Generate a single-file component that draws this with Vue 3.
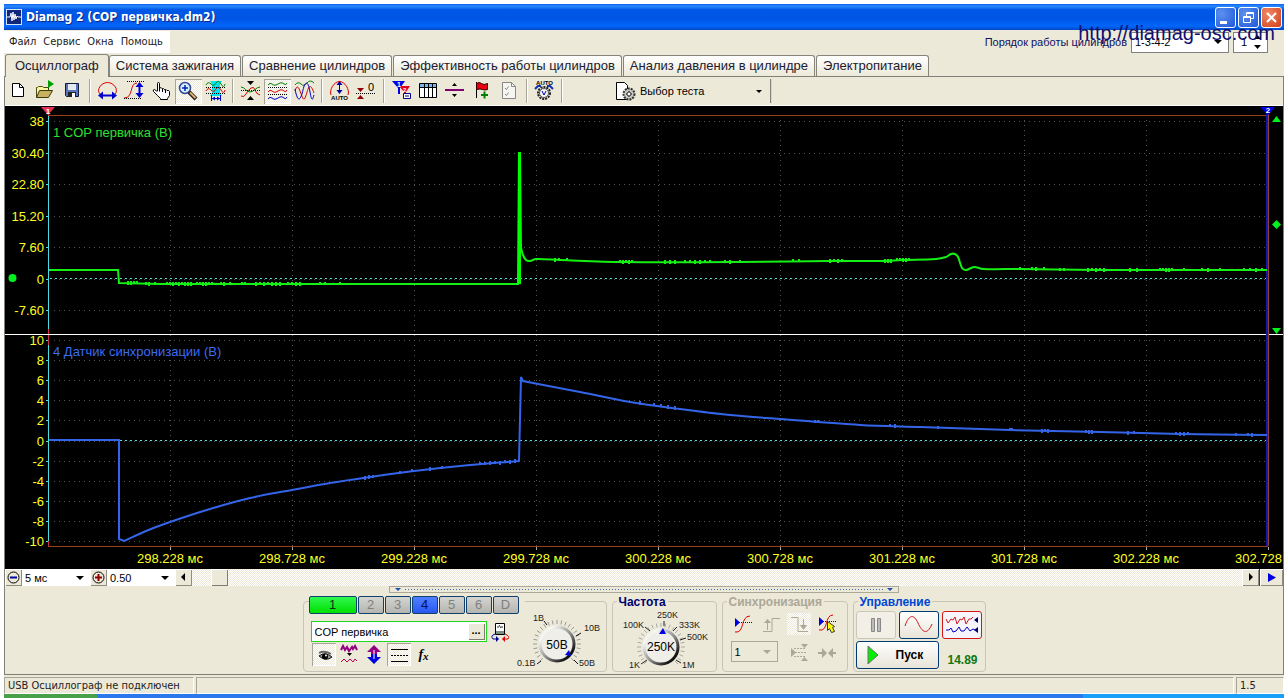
<script setup>
import { ref } from 'vue'

const tabs = [
  'Осциллограф',
  'Система зажигания',
  'Сравнение цилиндров',
  'Эффективность работы цилиндров',
  'Анализ давления в цилиндре',
  'Электропитание',
]
const activeTab = ref(0)

const red = 'fill="none" stroke="#d80000"'
const blue = 'fill="none" stroke="#0000c8"'
const green = 'fill="none" stroke="#008000"'
const dots = 'fill="none" stroke="#000" stroke-dasharray="1 1"'

// Toolbar groups; every glyph is drawn on a 27x25 grid.
const toolGroups = [
  [
    { name: 'Новый', art: '<path d="M7.500 4.500h7l4 4v9h-11z" fill="#fff" stroke="#000"/><path d="M14.500 4.500v4h4" fill="none" stroke="#000"/>' },
    { name: 'Открыть', art: '<path d="M4.500 18.500v-10h1l1-1h4l1 1h5v3" fill="#fbf6a0" stroke="#4a4a10"/><path d="M4.500 18.500l3-7h13l-4 7z" fill="#c8b060" stroke="#3a3a10"/><path d="M16.500 2v8" stroke="#004000"/><path d="M16 1l6 4-6 4z" fill="#00a000"/>' },
    { name: 'Сохранить', art: '<path d="M6.500 4.500h13v13h-12l-1-1z" fill="#5b74b8" stroke="#101838"/><path d="M9 5h8v6H9z" fill="#e4e8f0"/><path d="M9 13h8v5H9z" fill="#222"/><path d="M13 14h3v4h-3z" fill="#fff"/>' },
  ],
  [
    { name: 'Масштаб по времени', art: `<path d="M6 15C2 11 7 3.500 13.500 3.500S25 11 21 15" ${red}/><path d="M8 16.500h11" stroke="#0000d0" stroke-width="2"/><path d="M4 16.500l5-4v8zM23 16.500l-5-4v8z" fill="#0000d0"/>` },
    { name: 'Масштаб по амплитуде', art: `<path d="M3 19c10 0 5-15 13-15" ${red}/><path d="M6 2.500h17M3 19.500h17" ${dots}/><path d="M18.500 6v10" stroke="#0000d0" stroke-width="2"/><path d="M18.500 3l-4 5h8zM18.500 19l-4-5h8z" fill="#0000d0"/>` },
    { name: 'Рука', art: '<path d="M9.500 12V4.500q0-1 1-1t1 1V10V9q2-1 2.500.5V10q2-1 2.500.5v.5q2-1 2.500.5 2-.5 2.500 1v4l-2 3v1h-7v-1l-3-3-4-4q-1-2 1-2l2 1.500z" fill="#fff" stroke="#000"/><path d="M11.500 9.500v3M14.500 10v3M17.500 11v3" stroke="#000"/>' },
    { name: 'Лупа', pressed: true, art: '<circle cx="10" cy="9" r="5.500" fill="#d8f0ff" stroke="#304890" stroke-width="1.500"/><path d="M7 9h6M10 6v6" stroke="#0020b0" stroke-width="1.500"/><path d="M14 13l7 7" stroke="#222" stroke-width="4"/><path d="M15 13.500l5.500 5.500" stroke="#e0b070" stroke-width="2"/>' },
    { name: 'Выделение', art: `<path d="M8 2h12l-2 3v9l2 3H8l2-3V5z" fill="#00e4f0"/><path d="M4 6q2-4 5-1t5-1 5 1 4 0" ${green}/><path d="M4 12q2-4 5-1t5-1 5 1 4 0" ${red}/><path d="M4 8.500h20M4 14.500h20" ${dots}/><path d="M10 19.500h8M9.500 16v6M18.500 16v6" stroke="#0000c0" fill="none"/><path d="M10 19.500l3-2v4zM18 19.500l-3-2v4z" fill="#0000c0"/>` },
  ],
  [
    { name: 'Совместить', art: `<path d="M4 17q3 2 5-2t5-6 4 2 5 5" ${red}/><path d="M4 8c4 0 5 5 9 5s6-5 10-5" ${green}/><path d="M4 11.500h19" ${dots}/><path d="M10 2h7l-3.500 4zM10 21h7l-3.500-4z" fill="#000"/>` },
    { name: 'Разнести', pressed: true, art: `<path d="M4 6q2-3 4-1t4 1 4-2 4 1 3-1" ${green}/><path d="M4 13q2-3 4-1t4 1 4-2 4 1 3-1" ${red}/><path d="M4 20q2-3 4-1t4 1 4-2 4 1 3-1" ${blue}/><path d="M4 8.500h19M4 15.500h19" ${dots}/>` },
    { name: 'Наложить', art: `<path d="M4 6q3-4 6-1t6-1 7 0" ${green}/><path d="M4 12c4-14 7 14 10 7s4-19 9-5" ${red}/><path d="M4 10c3 16 6 10 8 1s5-10 7 2 3 6 4 3" ${blue}/>` },
  ],
  [
    { name: 'Автомасштаб', art: `<path d="M5 16C3 11 8 2.500 13.500 2.500S24 11 22 16" ${red}/><path d="M13.500 4v10" stroke="#0000a0" stroke-width="1"/><path d="M13.500 2l-3 4h6zM13.500 15l-3-4h6z" fill="#0000a0"/><text x="13.500" y="21" text-anchor="middle" font-size="6" font-weight="700" font-family="Liberation Sans">AUTO</text>` },
    { name: 'Сброс нуля', art: `<path d="M4 9h7l-3.500 4zM4 20h7l-3.500-4z" fill="#900000"/><path d="M3 14.500h19" ${dots}/><text x="15" y="12" font-size="11" font-family="Liberation Sans">0</text>` },
  ],
  [
    { name: 'Маркеры', art: '<path d="M4 2h13l-5 7v6h-2V9z" fill="#0000e0"/><path d="M11 7h11l-4 6v5h-2v-5z" fill="#e00020"/><text x="9" y="8" font-size="7" font-weight="700" fill="#fff" font-family="Liberation Sans">1</text><text x="15" y="13" font-size="6" font-weight="700" fill="#fff" font-family="Liberation Sans">2</text><path d="M15.500 14.500h7v5h-7z" fill="#fff" stroke="#000080"/><path d="M17 17h4" stroke="#000080"/>' },
    { name: 'Таблица', art: '<path d="M4.500 4.500h17v14h-17z" fill="#fff" stroke="#000"/><path d="M5 5h16v3H5z" fill="#78b4f0"/><path d="M4 8.500h18M9.500 5v13M13.500 5v13M17.500 5v13" stroke="#000"/>' },
    { name: 'Разделитель', art: '<path d="M3 11h19" stroke="#800070" stroke-width="2"/><path d="M10 7h5l-2.500-3zM10 15h5l-2.500 3z" fill="#000"/>' },
    { name: 'Метка', art: '<path d="M7.500 3v16" stroke="#000"/><path d="M7.500 4.500q3-2 5 0t6 0v6q-3 1-5 0t-6 0z" fill="#e80010" stroke="#300000"/><path d="M12 16h7M15.500 12.500v7" stroke="#008000" stroke-width="2"/>' },
    { name: 'Список', art: '<path d="M6.500 3.500h9l4 4v12h-13z" fill="#f6f6f0" stroke="#888"/><path d="M15.500 3.500v4h4M9 9l1.500 1.500 2-3M9 15l1.500 1.500 2-3" fill="none" stroke="#888"/>' },
  ],
  [
    { name: 'Автоматический запуск', art: '<text x="13.500" y="6" text-anchor="middle" font-size="6" font-weight="700" font-family="Liberation Sans">AUTO</text><path d="M4 10l3-3h3M22 10l-3-3h-3" fill="none" stroke="#1030b0" stroke-width="2"/><circle cx="13" cy="14" r="6" fill="#ddd" stroke="#222" stroke-width="2" stroke-dasharray="2 1"/><circle cx="13" cy="14" r="4.500" fill="#f4f4f4" stroke="#555"/><path d="M11 12l2 4 2-4" fill="none" stroke="#0000b0"/>' },
  ],
]

// Time axis and value axes
const xTicks = Array.from({ length: 10 }, (_, i) => ({
  x: 170 + i * 122,
  label: (298.228 + i * 0.5).toFixed(3),
}))
const topTicks = ['38', '30.40', '22.80', '15.20', '7.60', '0', '-7.60'].map((label, i) => ({
  label,
  y: Math.round(121 + i * 31.5),
}))
const bottomTicks = ['10', '8', '6', '4', '2', '0', '-2', '-4', '-6', '-8', '-10'].map((label, i) => ({
  label,
  y: Math.round(340 + i * 20.1),
}))

const greenEdge = [[49, 270], [118, 270], [119, 283], [160, 284], [518, 284], [519, 153], [520, 153], [521, 248]]
const greenTail = [
  [521, 248], [523, 255], [526, 260], [530, 261], [536, 259], [560, 260], [622, 262], [740, 262],
  [830, 261], [884, 261], [902, 260], [936, 259], [946, 257], [951, 254], [955, 254],
  [958, 257], [962, 268], [966, 270], [974, 267], [983, 269], [1020, 269], [1100, 270], [1267, 270],
]
const blueEdge = [[49, 440], [119, 440], [119, 539], [124, 541]]
const blueRise = [
  [124, 541], [146, 531], [170, 522], [210, 509], [250, 498], [292, 490], [330, 483], [370, 477],
  [414, 471], [460, 466], [519, 461],
]
const blueJump = [[519, 461], [521, 377], [523, 381]]
const blueDecay = [
  [523, 381], [580, 392], [630, 402], [680, 409], [730, 415],
  [780, 419], [860, 425], [920, 427], [1010, 430], [1100, 432], [1180, 434], [1267, 435],
]

const line = (pts) => 'M' + pts.map((p) => p.join(' ')).join('L')
// Smooth curve that passes through every point
function curve(pts) {
  let d = ''
  for (let i = 0; i < pts.length - 1; i++) {
    const p0 = pts[i - 1] || pts[i]
    const p1 = pts[i]
    const p2 = pts[i + 1]
    const p3 = pts[i + 2] || p2
    const w = (p2[0] - p1[0]) / 3
    const s1 = p2[0] === p0[0] ? 0 : (p2[1] - p0[1]) / (p2[0] - p0[0])
    const s2 = p3[0] === p1[0] ? 0 : (p3[1] - p1[1]) / (p3[0] - p1[0])
    d += `C${p1[0] + w} ${p1[1] + s1 * w} ${p2[0] - w} ${p2[1] - s2 * w} ${p2[0]} ${p2[1]}`
  }
  return d
}
const greenPath = line(greenEdge) + curve(greenTail)
const bluePath = line(blueEdge) + curve(blueRise) + line(blueJump) + curve(blueDecay)

function levelAt(pts, x) {
  for (let i = 1; i < pts.length; i++) {
    const [x0, y0] = pts[i - 1]
    const [x1, y1] = pts[i]
    if (x >= x0 && x <= x1 && x1 > x0) return Math.round(y0 + ((y1 - y0) * (x - x0)) / (x1 - x0))
  }
  return 0
}
// Short vertical ticks that make the trace look like sampled noise
function noise(pts, ranges) {
  let d = ''
  let seed = 7
  for (const [from, to, step] of ranges) {
    for (let x = from; x <= to; x += step) {
      seed = (seed * 37 + 11) % 101
      if (seed % 3 !== 0) d += `M${x} ${levelAt(pts, x) - 2}v${seed % 2 ? 3 : 4}`
    }
  }
  return d
}
const greenNoise = noise([...greenEdge, ...greenTail], [
  [128, 246, 3], [256, 300, 4], [320, 340, 5], [555, 568, 2], [620, 632, 3], [665, 740, 5],
  [775, 800, 6], [830, 842, 4], [885, 910, 3], [1020, 1064, 4], [1088, 1104, 4],
  [1130, 1150, 7], [1160, 1174, 3], [1184, 1262, 6],
])
const blueNoise = noise([...blueEdge, ...blueRise, ...blueDecay], [
  [365, 376, 4], [400, 412, 4], [430, 460, 6], [480, 516, 5], [640, 680, 7], [815, 823, 3],
  [885, 900, 5], [938, 944, 3], [1008, 1012, 2], [1042, 1048, 3], [1086, 1093, 3],
  [1128, 1136, 3], [1176, 1190, 4], [1236, 1254, 4],
])

const channels = ['1', '2', '3', '4', '5', '6', 'D']
const channelName = ref('COP первичка')
const order = ref('1-3-4-2')
const cylinder = ref('1')
const timeScale = ref('5 мс')
const zoomScale = ref('0.50')
const syncChannel = ref('1')

// Tick marks of a round knob, spread over 270 degrees
function knobTicks(cx, cy) {
  let d = ''
  for (let i = 0; i <= 24; i++) {
    const a = ((135 + i * 11.25) * Math.PI) / 180
    const p = (r) => `${(cx + r * Math.cos(a)).toFixed(1)} ${(cy + r * Math.sin(a)).toFixed(1)}`
    d += `M${p(20)}L${p(24)}`
  }
  return d
}
</script>

<template>
  <div class="screen">
    <div class="window">
      <header class="titlebar">
        <svg class="logo" width="16" height="16" viewBox="0 0 16 16">
          <rect x=".5" y=".5" width="15" height="15" fill="#10287c" stroke="#d4e4ff" />
          <path d="M1 8h3l1-4 1 8 1-9 1 8 1-6 1 5 1-3 1 1h3" fill="none" stroke="#fff" />
        </svg>
        <h1>Diamag 2 (COP первичка.dm2)</h1>
        <div class="sysbuttons">
          <button aria-label="Свернуть"><svg width="19" height="19"><path d="M4 13h7v3H4z" fill="#fff" /></svg></button>
          <button aria-label="Развернуть">
            <svg width="19" height="19"><path d="M7.500 8V4.500h7v6H12M7 5.500h8M4.500 8.500h7v6h-7zM4 9.500h8" fill="none" stroke="#fff" /></svg>
          </button>
          <button class="close" aria-label="Закрыть">
            <svg width="19" height="19"><path d="M5 5l9 9M14 5l-9 9" stroke="#fff" stroke-width="2" /></svg>
          </button>
        </div>
      </header>

      <div class="menurow">
        <nav class="menu">
          <a href="#">Файл</a><a href="#">Сервис</a><a href="#">Окна</a><a href="#">Помощь</a>
        </nav>
        <div class="order">
          <label for="order">Порядок работы цилиндров</label>
          <span class="combo order-combo"><select id="order" v-model="order"><option>1-3-4-2</option></select></span>
          <span class="spin">
            <input v-model="cylinder" aria-label="Цилиндр" />
            <svg width="8" height="16"><path d="M0 5h7l-3.500-4zM0 11h7l-3.500 4z" fill="#000" /></svg>
          </span>
        </div>
      </div>

      <nav class="tabs">
        <button v-for="(t, i) in tabs" :key="t" :class="{ active: i === activeTab }" @click="activeTab = i">{{ t }}</button>
      </nav>

      <div class="workspace">
        <div class="toolbar">
          <div v-for="(g, gi) in toolGroups" :key="gi" class="toolgroup">
            <button v-for="b in g" :key="b.name" :class="{ pressed: b.pressed }" :aria-label="b.name">
              <svg width="27" height="25" viewBox="0 0 27 25" v-html="b.art"></svg>
            </button>
          </div>
          <button class="test">
            <svg width="22" height="21" viewBox="0 0 22 21">
              <path d="M1.500 1.500h8l3 3v14h-11z" fill="#fff" stroke="#000" />
              <circle cx="14" cy="13" r="5.500" fill="#c8c8c0" stroke="#333" stroke-width="2" stroke-dasharray="2 1" />
              <path d="M11 13h6M14 10v6" stroke="#222" />
              <circle cx="14" cy="13" r="2" fill="#fff" stroke="#333" />
            </svg>
            <span>Выбор теста</span>
            <i class="caret"></i>
          </button>
        </div>

        <svg class="scope" viewBox="5 106 1278 463">
          <rect x="5" y="106" width="1278" height="463" fill="#000" />
          <g class="grid">
            <path v-for="t in topTicks" :key="'t' + t.y" :d="`M53.500 ${t.y + 0.5}H1266`" />
            <path v-for="t in bottomTicks" :key="'b' + t.y" :d="`M53.500 ${t.y + 0.5}H1266`" />
            <path v-for="t in xTicks.slice(0, 9)" :key="t.x" :d="`M${t.x + 0.5} 120V546`" />
          </g>
          <g class="crisp">
            <path d="M49 278.500H1266M49 440.500H1266" stroke="#000" />
            <path d="M50 278.500H1266M50 440.500H1266" stroke="#58e0e0" stroke-dasharray="2 3" />
            <path d="M48 115.500H1268M48 546.500H1268" stroke="#964020" />
            <path d="M48.500 112v434" stroke="#d03050" />
            <path d="M48.500 116v213M48.500 345v196" stroke="#48dce4" />
            <path v-for="t in [...topTicks, ...bottomTicks]" :key="t.y" :d="`M46 ${t.y + 0.5}h2`" stroke="#48dce4" />
            <path v-for="t in xTicks" :key="t.x" :d="`M${t.x + 0.5} 547v3`" stroke="#aaa" />
            <path d="M5 334.500H1283" stroke="#fff" />
            <path d="M1268.500 113V546" stroke="#904040" />
            <path d="M1267 113V546" stroke="#1818a8" stroke-width="2" />
          </g>
          <path :d="greenPath" class="trace green" />
          <path :d="greenNoise" class="tick green" />
          <path d="M519.500 153V284" class="spike" />
          <path :d="bluePath" class="trace blue" />
          <path :d="blueNoise" class="tick blue" />
          <g class="axis" text-anchor="end">
            <text v-for="t in topTicks" :key="t.y" x="44" :y="t.y + 5">{{ t.label }}</text>
            <text v-for="t in bottomTicks" :key="t.y" x="44" :y="t.y + 5">{{ t.label }}</text>
          </g>
          <g class="axis" text-anchor="middle">
            <text v-for="t in xTicks.slice(0, 9)" :key="t.x" :x="t.x" y="563">{{ t.label }} мс</text>
          </g>
          <text class="axis" x="1235" y="563">302.728</text>
          <text x="53" y="137" fill="#2ee02e">1 COP первичка (В)</text>
          <text x="53" y="356" fill="#3c6cf0">4 Датчик синхронизации (В)</text>
          <path d="M41 107h14l-7 8z" fill="#e83058" />
          <text x="48" y="114" class="marker">1</text>
          <path d="M1260 107h15l-7 8z" fill="#0000e0" />
          <text x="1268" y="113" class="marker">2</text>
          <g fill="#00f020">
            <circle cx="12.500" cy="278" r="4" />
            <path d="M1272 122h9l-4.500-6zM1276.500 220l4.500 4.500-4.500 4.500-4.500-4.500zM1272 328h9l-4.500 6z" />
          </g>
        </svg>

        <div class="zoomrow">
          <button aria-label="Уменьшить">
            <svg width="13" height="13"><circle cx="6.500" cy="6.500" r="5.500" fill="#ece9d8" stroke="#000" /><path d="M3 6.500h7" stroke="#0000a0" stroke-width="2" /></svg>
          </button>
          <span class="combo flat"><select v-model="timeScale" aria-label="Развёртка"><option>5 мс</option></select></span>
          <button aria-label="Увеличить">
            <svg width="13" height="13"><circle cx="6.500" cy="6.500" r="5.500" fill="#ece9d8" stroke="#000" /><path d="M3 6.500h7M6.500 3v7" stroke="#900000" stroke-width="2" /></svg>
          </button>
          <span class="combo flat"><select v-model="zoomScale" aria-label="Масштаб"><option>0.50</option></select></span>
          <button aria-label="Назад"><svg width="9" height="9"><path d="M6 0v8L2 4z" /></svg></button>
          <div class="track"><div class="thumb"></div></div>
          <button aria-label="Вперёд"><svg width="9" height="9"><path d="M3 0v8l4-4z" /></svg></button>
          <button class="play" aria-label="В конец"><svg width="10" height="9"><path d="M1 0v9l8-4.500z" fill="#0000e0" /></svg></button>
        </div>

        <div class="splitter"><i></i><b></b><i></i></div>

        <div class="panels">
          <section class="panel channel">
            <div class="channel-left">
              <div class="channel-buttons">
                <button v-for="c in channels" :key="c" :class="'ch' + c">{{ c }}</button>
              </div>
              <div class="name-row">
                <div class="name-box">
                  <input v-model="channelName" aria-label="Имя канала" />
                  <button aria-label="Выбрать">...</button>
                </div>
                <button class="plain" aria-label="Датчик">
                  <svg width="19" height="20" viewBox="0 0 19 20">
                    <path d="M4.500 1.500h9v11h-9z" fill="#fff" stroke="#000" />
                    <path d="M5 9h8v3H5z" fill="#809080" /><path d="M6 5h2M10 5h2M8 3l2 3" stroke="#333" />
                    <path d="M4 12q-5 2-2 5h4" fill="none" stroke="#000090" /><path d="M5 14l3 3-3 3z" fill="#000090" />
                    <path d="M14 12q5 2 3 5h-3" fill="none" stroke="#e00000" /><path d="M14 14l-3 3 3 3z" fill="#e00000" />
                  </svg>
                </button>
              </div>
              <div class="view-row">
                <button class="plain pressed" aria-label="Показать">
                  <svg width="24" height="23" viewBox="0 0 24 23">
                    <path d="M7 10q5-3 12 1" fill="none" stroke="#666" stroke-width="2" />
                    <path d="M7 13q6-5 13 1-6 5-13-1z" fill="#999" stroke="#111" /><circle cx="13" cy="13.500" r="3" />
                    <circle cx="14" cy="12.500" r="1" fill="#fff" />
                  </svg>
                </button>
                <button class="plain" aria-label="Фильтр">
                  <svg width="24" height="23" viewBox="0 0 24 23">
                    <path d="M4 7l2-4 2 4 2-3 2 4 3-4 1 2 2-3 2 4" fill="none" stroke="#900080" stroke-width="2" />
                    <path d="M10 10h5l-2.500 3z" /><path d="M4 19l3-3 3 3 3-3 3 3 2-3 2 2" fill="none" stroke="#c00050" />
                  </svg>
                </button>
                <button class="plain" aria-label="Инвертировать">
                  <svg width="24" height="23" viewBox="0 0 24 23">
                    <path d="M12 2l7 7h-4v3H9V9H5z" fill="#900080" /><path d="M12 21l7-7h-4v-3H9v3H5z" fill="#0000e0" /><path d="M12 7v9" stroke="#fff" />
                  </svg>
                </button>
                <button class="plain pressed" aria-label="Линии">
                  <svg width="24" height="23" viewBox="0 0 24 23"><path d="M4 6.500h17M4 18.500h17" stroke="#000" /><path d="M4 12.500h17" stroke="#000" stroke-dasharray="2 1" /></svg>
                </button>
                <button class="plain fx" aria-label="Функция">f<small>x</small></button>
              </div>
            </div>
            <svg class="knob" width="88" height="66" viewBox="516 604 88 66">
              <path :d="knobTicks(557, 646)" stroke="#999" />
              <path d="M541 663l-4 3M574 662l4 4M547 627l-3-4M576 638l5-3" stroke="#111" />
              <circle cx="557" cy="646" r="17" fill="#efeee8" stroke="url(#rim)" stroke-width="3" />
              <path d="M571 658l-6-1 4-5z" fill="#0000e0" />
              <text x="557" y="651" class="value">50В</text>
              <g class="scale"><text x="533" y="623">1В</text><text x="584" y="633">10В</text><text x="517" y="668">0.1В</text><text x="579" y="668">50В</text></g>
              <defs><linearGradient id="rim" x1="0" y1="0" x2="1" y2="1"><stop offset=".2" stop-color="#f4f4f0" /><stop offset=".55" stop-color="#888" /><stop offset=".85" stop-color="#111" /></linearGradient></defs>
            </svg>
          </section>

          <section class="panel freq">
            <h2>Частота</h2>
            <svg class="knob" width="94" height="66" viewBox="618 604 94 66">
              <path :d="knobTicks(661, 647)" stroke="#aaa" />
              <path d="M664 626v-5M650 631l-5-4M673 631l4-4M680 640l6-2M647 660l-6 4M676 660l5 3" stroke="#222" />
              <circle cx="661" cy="647" r="17" fill="#efeee8" stroke="url(#rim)" stroke-width="3" />
              <path d="M663 628l-4 6h7z" fill="#0000e0" />
              <text x="661" y="651" class="value">250K</text>
              <g class="scale"><text x="657" y="618">250K</text><text x="623" y="628">100K</text><text x="679" y="628">333K</text><text x="687" y="640">500K</text><text x="629" y="668">1K</text><text x="682" y="668">1M</text></g>
            </svg>
          </section>

          <section class="panel sync">
            <h2>Синхронизация</h2>
            <div class="sync-grid">
              <button class="plain" aria-label="Уровень">
                <svg width="24" height="22" viewBox="0 0 24 22"><path d="M4 19c10 2 5-16 15-16" fill="none" stroke="#e00000" /><path d="M4 9.500h17" fill="none" stroke="#0000e0" stroke-dasharray="1 1" /><path d="M4 5l5 4.500L4 14z" fill="#0000e0" /></svg>
              </button>
              <button class="plain" aria-label="По фронту" disabled>
                <svg width="24" height="22" viewBox="0 0 24 22"><path d="M4 18.500h9V5.500h8M8.500 17V8" fill="none" stroke="#aca899" /><path d="M5 10h7L8.500 6z" fill="#aca899" /></svg>
              </button>
              <button class="plain checked" aria-label="По спаду" disabled>
                <svg width="24" height="22" viewBox="0 0 24 22"><path d="M4 4.500h7v14h10M16.500 6v9" fill="none" stroke="#aca899" /><path d="M13 12h7l-3.500 5z" fill="#aca899" /></svg>
              </button>
              <button class="plain" aria-label="Указать уровень">
                <svg width="24" height="22" viewBox="0 0 24 22"><path d="M4 17c10 2 5-15 14-15" fill="none" stroke="#e00000" /><path d="M4 8.500h18" stroke="#0000e0" stroke-dasharray="1 1" /><path d="M4 4l5 4.500L4 13z" fill="#0000e0" /><path d="M12.500 8.500l7 5-2 1 2 4-3 1-2-4-2 2z" fill="#ff0" stroke="#333" /></svg>
              </button>
              <span class="combo sync-combo"><select v-model="syncChannel" aria-label="Канал синхронизации" disabled><option>1</option></select></span>
              <button class="plain" aria-label="Окно" disabled>
                <svg width="24" height="22" viewBox="0 0 24 22"><path d="M7 7.500h12M7 15.500h12M5 11.500h15" stroke="#aca899" stroke-dasharray="2 1" /><path d="M4 7l5 4.500L4 16zM14 3h7l-3.500 4zM14 20h7l-3.500-4z" fill="#aca899" /></svg>
              </button>
              <button class="plain" aria-label="Центр" disabled>
                <svg width="24" height="22" viewBox="0 0 24 22"><path d="M3 12h6M16 12h5" stroke="#aca899" stroke-width="2" /><path d="M7 7l5 5-5 5zM18 7l-5 5 5 5z" fill="#aca899" /></svg>
              </button>
            </div>
          </section>

          <section class="panel control">
            <h2>Управление</h2>
            <div class="control-grid">
              <button class="big off" aria-label="Пауза" disabled>
                <svg width="16" height="18"><path d="M3.500 2.500h3v13h-3zM9.500 2.500h3v13h-3z" fill="#bbb" stroke="#888" /></svg>
              </button>
              <button class="big" aria-label="Однократно">
                <svg width="32" height="22"><path d="M2 12C6 0 11 0 15 9s9 13 14 1" fill="none" stroke="#d01818" stroke-width="1" /></svg>
              </button>
              <button class="big alert" aria-label="Непрерывно">
                <svg width="36" height="22"><path d="M2 5l2 4 3-4 2 1 2-3 2 7 3-5 2 1 2-3 2 7 3-5 2 0 2-2" fill="none" stroke="#d01818" /><path d="M2 16h3l2-2 2 4 3-1 3-4 2 4 3 0 3-4 3 4 3-2 2 1" fill="none" stroke="#0000c0" /><path d="M34 3v6l-4-3zM34 13v6l-4-3z" fill="#000060" /></svg>
              </button>
              <button class="big start">
                <svg width="13" height="20"><path d="M2 1v18L12 10z" fill="#00f000" stroke="#707070" /></svg><span>Пуск</span>
              </button>
              <output>14.89</output>
            </div>
          </section>
        </div>
      </div>

      <footer class="status">
        <span class="cell state">USB Осциллограф не подключен</span>
        <span class="cell wide"></span>
        <span class="cell version">1.5</span>
      </footer>
      <div class="taskbar"><i class="startstrip"></i><i class="tasks"></i><i class="tray"></i></div>
      <a class="watermark" href="http://diamag-osc.com">http://diamag-osc.com</a>
    </div>
  </div>
</template>

<style>
body { background: #fff; }
</style>

<style scoped>
* { box-sizing: border-box; }
.screen { padding: 4px 4px 0; font: 11px/14px "Liberation Sans", Arial, sans-serif; color: #000; }
.window { position: relative; background: #ece9d8; }
button, input, select { font: inherit; color: inherit; padding: 0; margin: 0; border-radius: 0; }
button { display: inline-flex; align-items: center; justify-content: center; flex: none; border: 0; background: none; }
svg { flex: none; display: block; }
h1, h2 { margin: 0; font-weight: 700; }

.titlebar { display: flex; align-items: center; height: 26px; padding: 0 2px; background: linear-gradient(#0a5cf0, #2a8cff 8%, #0058e6 22%, #0055e5 55%, #0266fb 85%, #0148c4); }
.titlebar h1 { margin-left: 4px; flex: 1; font: 700 12px/18px "DejaVu Sans Condensed", "Open Sans", sans-serif; color: #fff; text-shadow: 1px 1px #0a2a90; }
.sysbuttons { display: flex; gap: 2px; }
.sysbuttons button { width: 21px; height: 21px; border: 1px solid #fff; border-radius: 3px; background: radial-gradient(circle at 30% 30%, #5c90f0, #2058d8); }
.sysbuttons .close { background: radial-gradient(circle at 30% 30%, #f08868, #d04018); }

.menurow { display: flex; justify-content: space-between; height: 24px; padding-top: 1px; }
.menu { display: flex; gap: 7px; width: 166px; height: 22px; padding: 0 5px; align-items: center; background: #fff; }
.menu a { color: #222; text-decoration: none; font-family: "DejaVu Sans Condensed", "Open Sans", sans-serif; }
.order { display: flex; gap: 4px; align-items: center; height: 22px; padding-right: 16px; color: #101060; }
.combo { position: relative; display: block; }
.combo select { width: 100%; height: 100%; appearance: none; border: 0; background: transparent; padding-left: 3px; outline: 0; opacity: 1; color: #000; }
.combo::after { content: ""; position: absolute; right: 6px; top: 50%; margin-top: -2px; border: 4px solid transparent; border-top-color: #000; border-bottom: 0; }
.order-combo { width: 98px; height: 21px; border: 1px solid #808080; background: #fff; }
.spin { display: flex; align-items: center; width: 35px; height: 21px; border: 1px solid #808080; background: #fff; }
.spin input { width: 20px; border: 0; padding-left: 7px; background: none; color: #000; }

.tabs { display: flex; gap: 1px; align-items: flex-end; height: 23px; border-bottom: 1px solid #808078; padding-left: 1px; }
.tabs button { height: 21px; padding: 0 6px; border: 1px solid #85857c; border-bottom: 0; border-radius: 3px 3px 0 0; background: linear-gradient(#fff, #ece9d8); font-size: 13px; color: #202030; }
.tabs .active { height: 23px; margin: 0 -1px -1px 0; padding: 0 9px; background: #ece9d8; }

.workspace { border: 1px solid #808078; border-width: 0 1px 1px; padding-bottom: 2px; }
.toolbar { display: flex; height: 29px; padding: 2px 0; border-bottom: 1px solid #fff; }
.toolgroup { display: flex; padding-right: 8px; background: linear-gradient(90deg, #a8a598 50%, #fff 50%) right 3px top 0 / 2px 100% no-repeat; }
.toolgroup button { width: 27px; height: 25px; }
.pressed { background: repeating-conic-gradient(#fff 0 25%, #ece9d8 0 50%) 0 0 / 2px 2px; border: 0; box-shadow: inset 1px 1px #a8a598, inset -1px -1px #fff; }
.checked { background: repeating-conic-gradient(#fff 0 25%, #ece9d8 0 50%) 0 0 / 2px 2px; }
.test { width: 206px; padding: 0 8px 0 49px; gap: 3px; justify-content: flex-start; border-right: 2px groove #d8d5c8; }
.test span { flex: 1; text-align: left; }
.caret { border: 3px solid transparent; border-top-color: #000; border-bottom: 0; }

.scope { width: 100%; height: auto; font: 13px "Liberation Sans", Arial, sans-serif; }
.grid path { stroke: #545454; stroke-dasharray: 1 4; shape-rendering: crispEdges; }
.crisp path { shape-rendering: crispEdges; }
.axis { fill: #ffff20; }
.marker { fill: #fff; font-size: 8px; font-weight: 700; text-anchor: middle; }
.trace { fill: none; stroke-width: 2; }
.tick { fill: none; stroke-width: 2; }
.green { stroke: #14f014; }
.blue { stroke: #3464e8; }
.spike { stroke: #00ff00; stroke-width: 3; }

.zoomrow { display: flex; height: 17px; }
.zoomrow button { width: 17px; height: 17px; background: #ece9d8; box-shadow: inset 1px 1px #fff, inset -1px -1px #908c80; }
.zoomrow .play { width: 24px; border-left: 1px solid #1040c0; }
.flat { width: 68px; background: #fff; }
.track { flex: 1; background: repeating-conic-gradient(#fff 0 25%, #ece9d8 0 50%) 0 0 / 2px 2px; padding-left: 19px; }
.thumb { width: 17px; height: 17px; background: #ece9d8; box-shadow: inset 1px 1px #fff, inset -1px -1px #807c70; }
.splitter { display: flex; align-items: center; gap: 4px; width: 510px; height: 7px; margin: 0 auto; padding: 0 5px; border: 1px solid #aca899; }
.splitter i { border: 3px solid transparent; border-top-color: #2050b0; border-bottom: 0; }
.splitter b { flex: 1; height: 1px; background: repeating-linear-gradient(90deg, #4068b0 0 1px, transparent 1px 3px); }

.panels { display: flex; justify-content: center; gap: 5px; padding-top: 8px; }
.panel { height: 71px; border: 1px solid #c8c5b6; border-radius: 4px; }
.panel h2 { width: max-content; margin: -7px 0 0 4px; padding: 0 2px; background: #ece9d8; font-size: 12px; line-height: 14px; color: #000070; }
.knob { overflow: visible; }
.knob .value { font-size: 12px; text-anchor: middle; }
.knob .scale { font-size: 9px; fill: #222; }
.channel { display: flex; width: 304px; padding: 0 2px 0 5px; }
.channel-left { flex: 1; min-width: 0; margin-top: -6px; }
.channel-buttons { display: flex; gap: 1px; width: max-content; padding-right: 6px; background: #ece9d8; }
.channel-buttons button { width: 26px; height: 18px; border: 1px solid #10406c; border-radius: 2px; background: linear-gradient(#d4d4d0, #b4b4b0); font-size: 13px; color: #808080; }
.channel-buttons .ch1 { width: 48px; background: linear-gradient(#30f850, #00e000); color: #103010; }
.channel-buttons .ch4 { background: linear-gradient(#5080ff, #2858f0); color: #001060; }
.name-row { display: flex; gap: 4px; padding: 7px 0 1px 2px; }
.name-box { display: flex; flex: none; width: 176px; height: 21px; padding: 1px; border: 1px solid #20d820; background: #fff; }
.name-box input { flex: 1; min-width: 0; border: 0; padding-left: 2px; background: none; }
.name-box button { width: 17px; background: #ece9d8; box-shadow: inset 1px 1px #fff, inset -1px -1px #807c70; font-weight: 700; padding-bottom: 4px; }
.view-row { display: flex; gap: 1px; padding-left: 3px; }
.view-row button { width: 24px; height: 23px; }
.fx { font: italic 700 14px/20px "Liberation Serif", serif; }
.fx small { font-size: 11px; align-self: flex-end; }
.freq { width: 105px; }
.freq .knob { margin: -5px 0 0 5px; }
.sync { width: 126px; }
.panel.sync h2 { color: #aca899; }
.sync-grid { display: grid; grid-template-columns: repeat(4, 24px); column-gap: 4px; row-gap: 6px; padding: 4px 0 0 8px; }
.sync-grid button { width: 24px; height: 22px; }
.sync-combo { grid-column: span 2; width: 47px; height: 21px; border: 1px solid #aca899; }
.sync-combo::after { border-top-color: #aca899; }
.control { width: 133px; }
.panel.control h2 { color: #0046d5; }
.control-grid { display: grid; grid-template-columns: repeat(3, 40px); column-gap: 3px; row-gap: 2px; padding: 2px 0 0 2px; }
.big { width: 40px; height: 28px; border: 1px solid #003c74; border-radius: 3px; background: linear-gradient(#fff, #e8e4d8); }
.big.off { border-color: #c9c7ba; background: #f2f0e6; }
.big.alert { border: 1px solid #d01818; background: #f8f4fc; }
.big.start { grid-column: span 2; width: 83px; justify-content: flex-start; padding-left: 9px; gap: 17px; font-size: 12px; font-weight: 700; }
output { align-self: center; padding: 10px 0 0 6px; font-size: 12px; font-weight: 700; color: #107810; }

.status { display: flex; gap: 2px; height: 19px; padding-top: 2px; font: 11px/15px "DejaVu Sans Condensed", "Open Sans", sans-serif; color: #222; }
.cell { height: 17px; border: 1px solid; border-color: #a8a598 #fff #fff #a8a598; padding-left: 3px; }
.state { width: 190px; }
.wide { flex: 1; }
.version { width: 48px; }
.taskbar { display: flex; height: 4px; background: #2a78ec; }
.startstrip { width: 94px; background: #48a048; border-radius: 0 4px 0 0; }
.tasks { flex: 1; }
.tray { width: 201px; background: #18a0f8; }
.watermark { position: absolute; right: 9px; top: 18px; font-size: 20px; line-height: 22px; color: #101070; text-decoration: none; }
</style>
